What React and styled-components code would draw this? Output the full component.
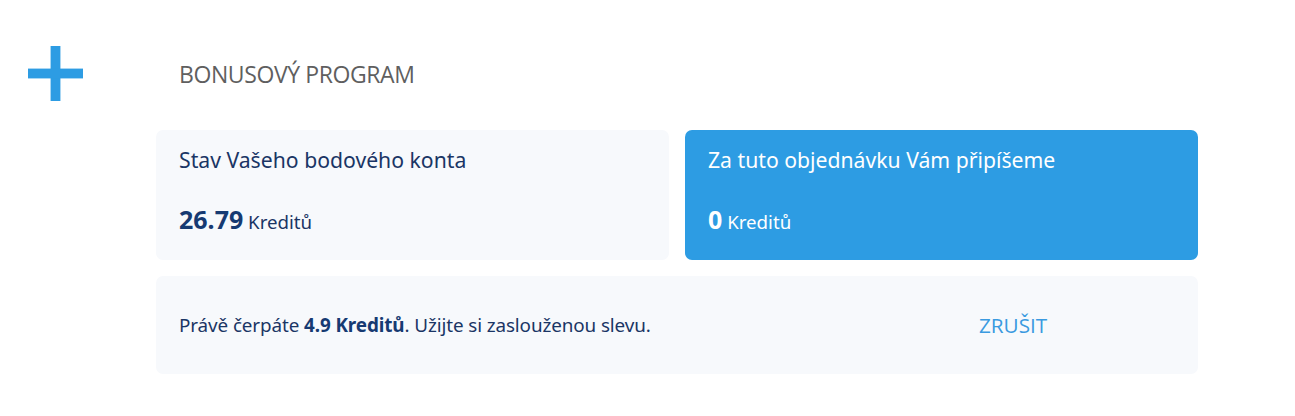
import React from 'react';
import styled, { createGlobalStyle } from 'styled-components';

const GlobalStyle = createGlobalStyle`
  body {
    margin: 0;
    background: #fff;
    font-family: "Noto Sans", "Open Sans", sans-serif;
  }
`;

export default function App() {
  return (
    <>
      <GlobalStyle />
      <Page>
        <IconCol>
          <PlusIcon viewBox="0 0 56 56">
            <rect x="23" y="0" width="10" height="56" fill="#2d9ce3" />
            <rect x="0" y="23" width="56" height="10" fill="#2d9ce3" />
          </PlusIcon>
        </IconCol>
        <Content>
          <Heading>BONUSOVÝ PROGRAM</Heading>
          <CardRow>
            <Card>
              <CardTitle>Stav Vašeho bodového konta</CardTitle>
              <Amount>
                <strong>26.79</strong> Kreditů
              </Amount>
            </Card>
            <Card $accent>
              <CardTitle $accent>Za tuto objednávku Vám připíšeme</CardTitle>
              <Amount $accent>
                <strong>0</strong> Kreditů
              </Amount>
            </Card>
          </CardRow>
          <InfoBar>
            <InfoText>
              Právě čerpáte <strong>4.9 Kreditů</strong>. Užijte si zaslouženou slevu.
            </InfoText>
            <CancelButton>ZRUŠIT</CancelButton>
          </InfoBar>
        </Content>
      </Page>
    </>
  );
}

const Page = styled.div`
  display: flex;
  padding: 46px 0 0 28px;
`;

const IconCol = styled.div`
  width: 128px;
  flex-shrink: 0;
`;

const PlusIcon = styled.svg`
  width: 55px;
  height: 55px;
  display: block;
`;

const Content = styled.div`
  width: 1042px;
  display: flex;
  flex-direction: column;
`;

const Heading = styled.h2`
  margin: 13px 0 0 23px;
  font-family: "Open Sans", sans-serif;
  font-weight: 400;
  font-size: 23px;
  letter-spacing: -0.4px;
  color: #5f5f5f;
  line-height: 30px;
`;

const CardRow = styled.div`
  display: grid;
  grid-template-columns: 1fr 1fr;
  gap: 16px;
  margin-top: 41px;
`;

const Card = styled.div`
  height: 130px;
  box-sizing: border-box;
  padding: 15px 23px;
  border-radius: 7px;
  background: ${p => (p.$accent ? '#2d9ce3' : '#f7f9fc')};
`;

const CardTitle = styled.div`
  font-size: 21.2px;
  line-height: 30px;
  color: ${p => (p.$accent ? '#fff' : '#1a3565')};
`;

const Amount = styled.div`
  margin-top: 29px;
  font-size: 18.7px;
  line-height: 30px;
  color: ${p => (p.$accent ? '#fff' : '#1a3565')};

  strong {
    font-size: 25px;
    font-weight: 700;
    color: ${p => (p.$accent ? '#fff' : '#163a72')};
  }
`;

const InfoBar = styled.div`
  margin-top: 16px;
  height: 98px;
  box-sizing: border-box;
  padding: 0 23px;
  border-radius: 7px;
  background: #f7f9fc;
  display: flex;
  align-items: center;
`;

const InfoText = styled.div`
  font-size: 18.85px;
  letter-spacing: -0.1px;
  color: #1a3565;
  width: 800px;

  strong {
    font-weight: 700;
    color: #163a72;
  }
`;

const CancelButton = styled.button`
  border: none;
  background: none;
  padding: 0;
  font-family: "Open Sans", sans-serif;
  font-size: 20.7px;
  color: #3a9ae0;
  cursor: pointer;
`;
